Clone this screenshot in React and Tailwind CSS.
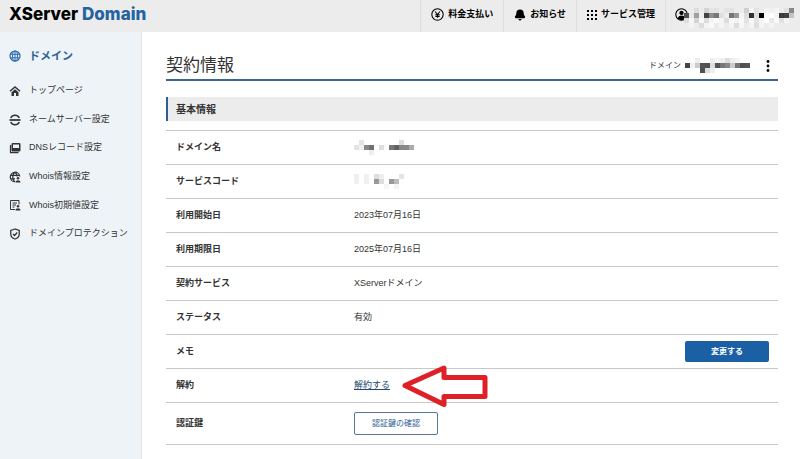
import React from 'react';
import { Bell } from 'lucide-react';

const MOSAICS = {
  account: {
    cell: 5,
    rows: [
      ['', '', '#ddd', '', '#d4d4d4', '#e4e4e4', '#e2e2e2', '', '#e4e4e4', '#e2e2e2', '', '', '#d0d0d0', '#f4f4f4', '#e4e4e4', '', '#f2f2f2', '#f0f0f0', '#f4f4f4', '', '#e2e2e2', '#888'],
      ['#505050', '#e8e8e8', '#a0a0a0', '#eee', '#444', '#8c8c8c', '#777', '#e0e0e0', '#eee', '#777', '#999', '#f4f4f4', '#ddd', '#333', '#ddd', '#000', '#fafafa', '#fff', '#f4f4f4', '#3c3c3c', '#444', '#c4c4c4'],
      ['#ddd', '#f6f6f6', '#d4d4d4', '#f8f8f8', '#ddd', '#f4f4f4', '#fafafa', '#f4f4f4', '#ddd', '#f8f8f8', '#f4f4f4', '#fafafa', '#e2e2e2', '#f8f8f8', '#e4e4e4', '#f4f4f4', '#fff', '#e8e8e8', '#fafafa', '#e2e2e2', '#f4f4f4', ''],
      ['', '#f4f4f4', '', '#ddd', '#f4f4f4', '#fafafa', '', '#f4f4f4', '', '#f4f4f4', '#ddd', '#f6f6f6', '', '#f4f4f4', '#dedede', '#f4f4f4', '', '#f4f4f4', '', '', '', ''],
    ],
  },
  domain: {
    cell: 5,
    rows: [
      ['', '', '#eee', '', '', '#eee', '#f4f4f4', '#eee', '#ddd', '#eee', '#f4f4f4', '', ''],
      ['#444', '#f2f2f2', '#ccc', '#555', '#505050', '#ddd', '#555', '#777', '#888', '#ccc', '#777', '#505050', '#555'],
      ['', '', '', '#505050', '#ddd', '#eee', '', '', '', '', '', '', ''],
    ],
  },
  name: {
    cell: 5,
    rows: [
      ['', '#e4e4e4', '', '', '', '', '', '', '', '#ddd', '', ''],
      ['#e4e4e4', '#f0f0f0', '#888', '#707070', '', '#ddd', '', '#777', '#606060', '#888', '#888', '#aaa'],
      ['', '', '', '#eee', '', '', '', '', '', '', '', ''],
    ],
  },
  code: {
    cell: 5,
    rows: [
      ['#eee', '', '#f0f0f0', '', '#ddd', '#eee', '', '', '', '#e4e4e4'],
      ['#f0f0f0', '', '#f0f0f0', '', '#999', '#ddd', '', '#999', '#bbb', ''],
      ['', '', '', '', '', '', '#f6f6f6', '', '#f4f4f4', ''],
    ],
  },
};

const Mosaic = ({ name, className }) => {
  const { cell, rows } = MOSAICS[name];
  const width = rows[0].length * cell;
  const height = rows.length * cell;

  return (
    <svg width={width} height={height} className={className} shapeRendering="crispEdges" aria-hidden="true">
      {rows.map((row, y) =>
        row.map((fill, x) =>
          fill ? <rect key={`${x}-${y}`} x={x * cell} y={y * cell} width={cell} height={cell} fill={fill} /> : null
        )
      )}
    </svg>
  );
};

const Icon = ({ children, className = 'size-3' }) => (
  <svg viewBox="0 0 24 24" fill="none" stroke="currentColor" strokeWidth="2" className={`shrink-0 ${className}`} aria-hidden="true">
    {children}
  </svg>
);

const YenIcon = () => (
  <Icon className="size-[13px]">
    <circle cx="12" cy="12" r="10.5" />
    <path d="M7.5 6.5 12 12l4.5-5.5M12 12v6M8 12.5h8M8 15.5h8" />
  </Icon>
);

const UserIcon = () => (
  <Icon className="size-[13px]">
    <circle cx="12" cy="12" r="10.5" />
    <circle cx="12" cy="9" r="4" fill="currentColor" stroke="none" />
    <path d="M5 20c1-8 13-8 14 0l-7 3z" fill="currentColor" stroke="none" />
  </Icon>
);

const GlobeIcon = () => (
  <Icon className="size-3 text-[#2c6cb0]">
    <circle cx="12" cy="12" r="10" strokeWidth="2.5" />
    <ellipse cx="12" cy="12" rx="5" ry="10" />
    <path d="M3 8.5h18M3 15.5h18M12 2v20" />
  </Icon>
);

const HomeIcon = () => (
  <Icon>
    <path d="M2 12.5 12 4l10 8.5" strokeWidth="3" />
    <path d="M5 14.5 12 8.5l7 6V22h-5v-6h-4v6H5z" fill="currentColor" stroke="none" />
  </Icon>
);

const ServerIcon = () => (
  <Icon>
    <path d="M3.5 8C5 4.5 8.5 2.5 12 2.5s7 2 8.500 5.500M3.5 16C5 19.5 8.5 21.5 12 21.5s7-2 8.500-5.500" strokeWidth="3" />
    <path d="M1 12h22" strokeWidth="3.5" />
  </Icon>
);

const RecordIcon = () => (
  <Icon>
    <path d="M3 6v15h16" strokeWidth="2.5" />
    <rect x="6.5" y="3.5" width="15" height="14" rx="1" strokeWidth="3" />
    <path d="M7 13h14v4H7z" fill="currentColor" />
  </Icon>
);

const WhoisIcon = () => (
  <Icon>
    <path d="M12 21.5A9.5 9.5 0 1 1 21.5 11M12 2.5c-6 4-6 15 0 19M12 2.5c3 2 4 5 4 8.5M3 8.5h18M3 15.5h9" strokeWidth="2.5" />
    <circle cx="18" cy="14.5" r="2.5" fill="currentColor" stroke="none" />
    <path d="M13 23c0-6 10-6 10 0z" fill="currentColor" stroke="none" />
  </Icon>
);

const DefaultsIcon = () => (
  <Icon>
    <path d="M12 21H3V3h17v8M7 8h9M7 12h7M7 16h4" />
    <circle cx="18" cy="14.5" r="2.5" fill="currentColor" stroke="none" />
    <path d="M13 23c0-6 10-6 10 0z" fill="currentColor" stroke="none" />
  </Icon>
);

const ShieldIcon = () => (
  <Icon>
    <path d="M12 2 3.5 5v7c0 5 3.5 8.5 8.5 10 5-1.5 8.5-5 8.5-10V5z" strokeWidth="2.5" />
    <path d="m8 12 3 3 5.5-6" strokeWidth="2.5" />
  </Icon>
);

const DotsIcon = () => (
  <svg viewBox="0 0 10 10" className="size-[10px] shrink-0" fill="currentColor" aria-hidden="true">
    {[0, 4, 8].map((y) => [0, 4, 8].map((x) => <rect key={`${x}${y}`} x={x} y={y} width="2" height="2" />))}
  </svg>
);

const KebabIcon = () => (
  <svg viewBox="0 0 4 12" className="h-3 w-1" fill="currentColor" aria-hidden="true">
    <circle cx="2" cy="1.5" r="1.4" />
    <circle cx="2" cy="6" r="1.4" />
    <circle cx="2" cy="10.5" r="1.4" />
  </svg>
);

const BellIcon = () => <Bell className="size-3 shrink-0" fill="currentColor" strokeWidth={2.5} />;

const headerLinks = [
  { label: '料金支払い', icon: YenIcon },
  { label: 'お知らせ', icon: BellIcon },
  { label: 'サービス管理', icon: DotsIcon },
];

const menu = [
  { label: 'トップページ', icon: HomeIcon },
  { label: 'ネームサーバー設定', icon: ServerIcon },
  { label: 'DNSレコード設定', icon: RecordIcon },
  { label: 'Whois情報設定', icon: WhoisIcon },
  { label: 'Whois初期値設定', icon: DefaultsIcon },
  { label: 'ドメインプロテクション', icon: ShieldIcon },
];

const Header = () => (
  <header className="flex h-8 items-stretch justify-between bg-[#ececec] text-black">
    <a href="#" className="flex items-center gap-1 pb-[3px] pl-[9px] font-['Inter',sans-serif] text-[17px] font-extrabold">
      <span>XServer</span>
      <span className="text-[#2563a0]">Domain</span>
    </a>
    <nav className="flex items-stretch text-[9px] font-bold">
      {headerLinks.map(({ label, icon: ItemIcon }) => (
        <a key={label} href="#" className="flex items-center gap-1 border-l border-[#dedede] px-[10px] pb-[3px] whitespace-nowrap">
          <ItemIcon />
          {label}
        </a>
      ))}
      <button type="button" aria-label="アカウント" className="flex items-start border-l border-[#dedede] pt-2 pr-[6px] pl-[9px]">
        <UserIcon />
        <Mosaic name="account" className="-ml-1" />
      </button>
    </nav>
  </header>
);

const Sidebar = () => (
  <aside className="w-[142px] shrink-0 border-r border-[#dfe5ea] bg-[#eef3f7] pt-[14px] pl-[9px]">
    <h2 className="flex h-5 items-center gap-2 text-[11px] font-bold text-[#2f6295]">
      <GlobeIcon />
      ドメイン
    </h2>
    <ul className="mt-[11px] flex h-[171px] flex-col justify-between text-[9px]">
      {menu.map(({ label, icon: ItemIcon }) => (
        <li key={label}>
          <a href="#" className="flex h-7 items-center gap-2 whitespace-nowrap">
            <ItemIcon />
            {label}
          </a>
        </li>
      ))}
    </ul>
  </aside>
);

const Arrow = () => (
  <svg width="88" height="44" viewBox="0 0 88 44" className="absolute top-1/2 left-[47px] -translate-y-1/2" aria-hidden="true">
    <path d="M4 21.5 43 4v9.5h41v19H43v8z" fill="#fff" stroke="#de2027" strokeWidth="5" strokeLinejoin="round" />
  </svg>
);

const Row = ({ label, children, tall }) => (
  <tr className={`border-b border-[#c8c8c8] ${tall ? 'h-[42px]' : 'h-[34px]'}`}>
    <th scope="row" className="w-[188px] pl-[10px] text-left font-bold">{label}</th>
    <td>{children}</td>
  </tr>
);

export default function App() {
  return (
    <div className="flex min-h-screen flex-col bg-white font-['Liberation_Sans','Noto_Sans_CJK_JP',sans-serif] text-[#333]">
      <Header />
      <div className="flex flex-1">
        <Sidebar />
        <main className="min-w-0 flex-1 pr-[22px] pl-6">
          <div className="flex h-[49px] items-center justify-between border-b-2 border-[#3c6690] pt-5">
            <h1 className="text-[17px]">契約情報</h1>
            <div className="flex items-center text-[8px]">
              ドメイン
              <Mosaic name="domain" className="ml-1" />
              <button type="button" aria-label="メニュー" className="mr-2 ml-4 text-black">
                <KebabIcon />
              </button>
            </div>
          </div>
          <h2 className="mt-4 flex h-6 items-center border-l-2 border-[#2f5f8f] bg-[#ececec] pl-2 text-[10px] font-bold">
            基本情報
          </h2>
          <table className="mt-[9px] w-full table-fixed border-collapse border-t border-[#c8c8c8] text-[9px]">
            <tbody>
              <Row label="ドメイン名"><Mosaic name="name" /></Row>
              <Row label="サービスコード"><Mosaic name="code" /></Row>
              <Row label="利用開始日">2023年07月16日</Row>
              <Row label="利用期限日">2025年07月16日</Row>
              <Row label="契約サービス">XServerドメイン</Row>
              <Row label="ステータス">有効</Row>
              <Row label="メモ">
                <button type="button" className="mr-[9px] ml-auto block h-[21px] w-[84px] rounded-xs bg-[#1b5fa5] text-[8px] font-bold text-white">
                  変更する
                </button>
              </Row>
              <Row label="解約">
                <span className="relative inline-block">
                  <a href="#" className="text-[#24496e] underline">解約する</a>
                  <Arrow />
                </span>
              </Row>
              <Row label="認証鍵" tall>
                <button type="button" className="block h-[23px] w-[84px] rounded-xs border border-[#55779a] text-[8px] text-[#2f6295]">
                  認証鍵の確認
                </button>
              </Row>
            </tbody>
          </table>
        </main>
      </div>
    </div>
  );
}
